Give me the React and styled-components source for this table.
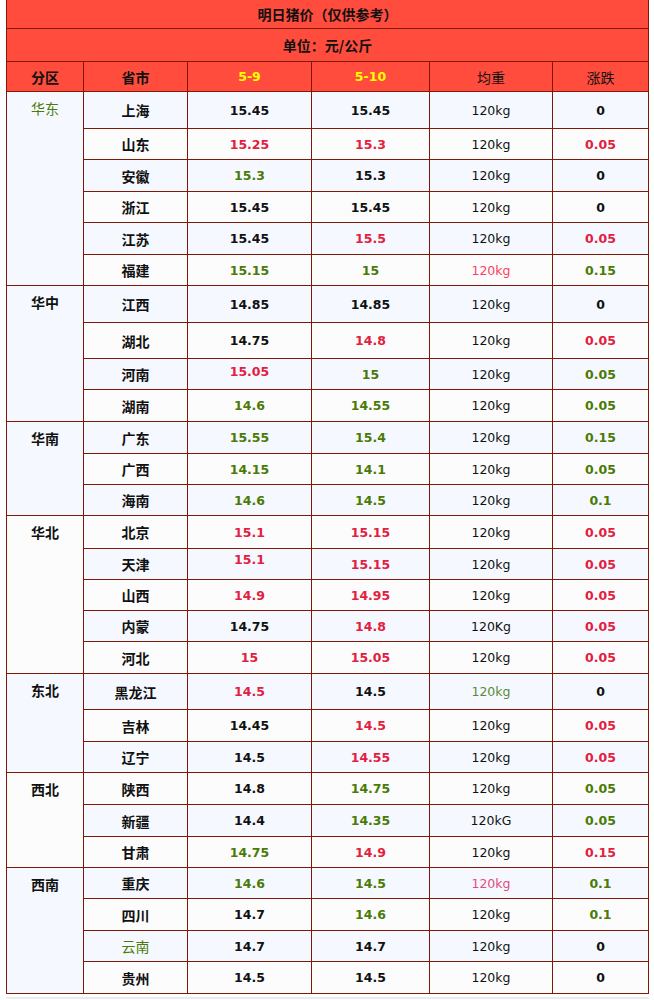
import React from "react";
import styled, { createGlobalStyle } from "styled-components";

const GlobalStyle = createGlobalStyle`
  body {
    margin: 0;
    background: #ffffff;
  }
`;

const CJK = `"Noto Sans CJK SC", "Noto Sans", sans-serif`;
const NUM = `"DejaVu Sans", "Noto Sans CJK SC", sans-serif`;

const INK = {
  k: "#111111",
  r: "#e2203f",
  g: "#4b7a06",
  pink: "#ff3f5e",
  rose: "#e44a7e",
  olive: "#5a8a36",
};

const Page = styled.div`
  padding: 0 5px 0 6px;
`;

const Sheet = styled.div`
  display: grid;
  grid-template-columns: 76px 103px 123px 117px 122px 95px;
  grid-template-rows: ${(p) => p.$rows};
  gap: 1px;
  width: 643px;
  box-sizing: border-box;
  padding: 0 1px 1px;
  background: #801808;
`;

const Banner = styled.div`
  grid-column: 1 / -1;
  display: flex;
  align-items: center;
  justify-content: center;
  background: #ff4c3d;
  color: #111111;
  font-family: ${CJK};
  font-size: 14px;
  font-weight: 700;
  white-space: pre;
`;

// full-width punctuation keeps its em box like in the source
const Punct = styled.span`
  display: inline-block;
  width: 1em;
  text-align: center;
`;

const HeadCell = styled.div`
  display: flex;
  align-items: center;
  justify-content: center;
  background: #ff4c3d;
  color: ${(p) => (p.$accent ? "#ffff00" : "#111111")};
  font-family: ${(p) => (p.$num ? NUM : CJK)};
  font-size: ${(p) => (p.$num ? "12.5px" : "14px")};
  font-weight: ${(p) => (p.$light ? 400 : 700)};
`;

const ZoneCell = styled.div`
  grid-row: span ${(p) => p.$span};
  background: ${(p) => (p.$alt ? "#fcfcfc" : "#f5f9ff")};
  padding-top: 6px;
  text-align: center;
  line-height: 20px;
  font-family: ${CJK};
  font-size: 14px;
  font-weight: ${(p) => (p.$color ? 400 : 700)};
  color: ${(p) => (p.$color ? INK[p.$color] : INK.k)};
`;

const Cell = styled.div`
  display: flex;
  align-items: center;
  justify-content: center;
  box-sizing: border-box;
  padding-bottom: ${(p) => p.$raise || 0}px;
  background: ${(p) => (p.$alt ? "#fcfcfc" : "#f5f9ff")};
  font-family: ${(p) => (p.$num ? NUM : CJK)};
  font-size: ${(p) => (p.$num ? "12.5px" : "14px")};
  font-weight: ${(p) => (p.$light ? 400 : 700)};
  color: ${(p) => INK[p.$color || "k"]};
`;

const Rule = styled.div`
  width: 643px;
  height: 2px;
  margin-top: 3px;
  background: #ebebeb;
`;

// [省市, 行高, 5-9, 色, 5-10, 色, 均重, 色, 涨跌, 色, 选项]
const row = (p, h, a, ac, b, bc, w, wc, d, dc, opt = {}) => ({ p, h, a, ac, b, bc, w, wc, d, dc, ...opt });

const groups = [
  {
    zone: "华东",
    color: "g",
    rows: [
      row("上海", 36, "15.45", "k", "15.45", "k", "120kg", "k", "0", "k"),
      row("山东", 30, "15.25", "r", "15.3", "r", "120kg", "k", "0.05", "r"),
      row("安徽", 31, "15.3", "g", "15.3", "k", "120kg", "k", "0", "k"),
      row("浙江", 30, "15.45", "k", "15.45", "k", "120kg", "k", "0", "k"),
      row("江苏", 31, "15.45", "k", "15.5", "r", "120kg", "k", "0.05", "r"),
      row("福建", 30, "15.15", "g", "15", "g", "120kg", "pink", "0.15", "g"),
    ],
  },
  {
    zone: "华中",
    rows: [
      row("江西", 36, "14.85", "k", "14.85", "k", "120kg", "k", "0", "k"),
      row("湖北", 35, "14.75", "k", "14.8", "r", "120kg", "k", "0.05", "r"),
      row("河南", 30, "15.05", "r", "15", "g", "120kg", "k", "0.05", "g", { raise: 5 }),
      row("湖南", 31, "14.6", "g", "14.55", "g", "120kg", "k", "0.05", "g"),
    ],
  },
  {
    zone: "华南",
    rows: [
      row("广东", 31, "15.55", "g", "15.4", "g", "120kg", "k", "0.15", "g"),
      row("广西", 30, "14.15", "g", "14.1", "g", "120kg", "k", "0.05", "g"),
      row("海南", 30, "14.6", "g", "14.5", "g", "120kg", "k", "0.1", "g"),
    ],
  },
  {
    zone: "华北",
    rows: [
      row("北京", 32, "15.1", "r", "15.15", "r", "120kg", "k", "0.05", "r"),
      row("天津", 30, "15.1", "r", "15.15", "r", "120kg", "k", "0.05", "r", { raise: 9 }),
      row("山西", 30, "14.9", "r", "14.95", "r", "120kg", "k", "0.05", "r"),
      row("内蒙", 30, "14.75", "k", "14.8", "r", "120Kg", "k", "0.05", "r"),
      row("河北", 31, "15", "r", "15.05", "r", "120kg", "k", "0.05", "r"),
    ],
  },
  {
    zone: "东北",
    rows: [
      row("黑龙江", 35, "14.5", "r", "14.5", "k", "120kg", "olive", "0", "k"),
      row("吉林", 31, "14.45", "k", "14.5", "r", "120kg", "k", "0.05", "r"),
      row("辽宁", 30, "14.5", "k", "14.55", "r", "120kg", "k", "0.05", "r"),
    ],
  },
  {
    zone: "西北",
    rows: [
      row("陕西", 31, "14.8", "k", "14.75", "g", "120kg", "k", "0.05", "g"),
      row("新疆", 31, "14.4", "k", "14.35", "g", "120kG", "k", "0.05", "g"),
      row("甘肃", 30, "14.75", "g", "14.9", "r", "120kg", "k", "0.15", "r"),
    ],
  },
  {
    zone: "西南",
    rows: [
      row("重庆", 30, "14.6", "g", "14.5", "g", "120kg", "rose", "0.1", "g"),
      row("四川", 31, "14.7", "k", "14.6", "g", "120kg", "k", "0.1", "g"),
      row("云南", 30, "14.7", "k", "14.7", "k", "120kg", "k", "0", "k", { pc: "g" }),
      row("贵州", 31, "14.5", "k", "14.5", "k", "120kg", "k", "0", "k"),
    ],
  },
];

export default function App() {
  const heights = [28, 32, 29];
  groups.forEach((g) => g.rows.forEach((r) => heights.push(r.h)));
  const template = heights.map((h) => `${h}px`).join(" ");

  let index = 0;

  return (
    <>
      <GlobalStyle />
      <Page>
        <Sheet $rows={template}>
          <Banner>
            明日猪价<Punct>（</Punct>仅供参考<Punct>）</Punct>
          </Banner>
          <Banner>
            单位<Punct>：</Punct>元/公斤
          </Banner>

          <HeadCell>分区</HeadCell>
          <HeadCell>省市</HeadCell>
          <HeadCell $num $accent>5-9</HeadCell>
          <HeadCell $num $accent>5-10</HeadCell>
          <HeadCell $light>均重</HeadCell>
          <HeadCell $light>涨跌</HeadCell>

          {groups.map((g) => {
            const zoneAlt = index % 2 === 1;
            return (
              <React.Fragment key={g.zone}>
                <ZoneCell $span={g.rows.length} $alt={zoneAlt} $color={g.color}>
                  {g.zone}
                </ZoneCell>
                {g.rows.map((r) => {
                  const alt = index++ % 2 === 1;
                  return (
                    <React.Fragment key={r.p}>
                      <Cell $alt={alt} $color={r.pc} $light={!!r.pc}>{r.p}</Cell>
                      <Cell $alt={alt} $num $color={r.ac} $raise={r.raise}>{r.a}</Cell>
                      <Cell $alt={alt} $num $color={r.bc}>{r.b}</Cell>
                      <Cell $alt={alt} $num $light $color={r.wc}>{r.w}</Cell>
                      <Cell $alt={alt} $num $color={r.dc}>{r.d}</Cell>
                    </React.Fragment>
                  );
                })}
              </React.Fragment>
            );
          })}
        </Sheet>
        <Rule />
      </Page>
    </>
  );
}
